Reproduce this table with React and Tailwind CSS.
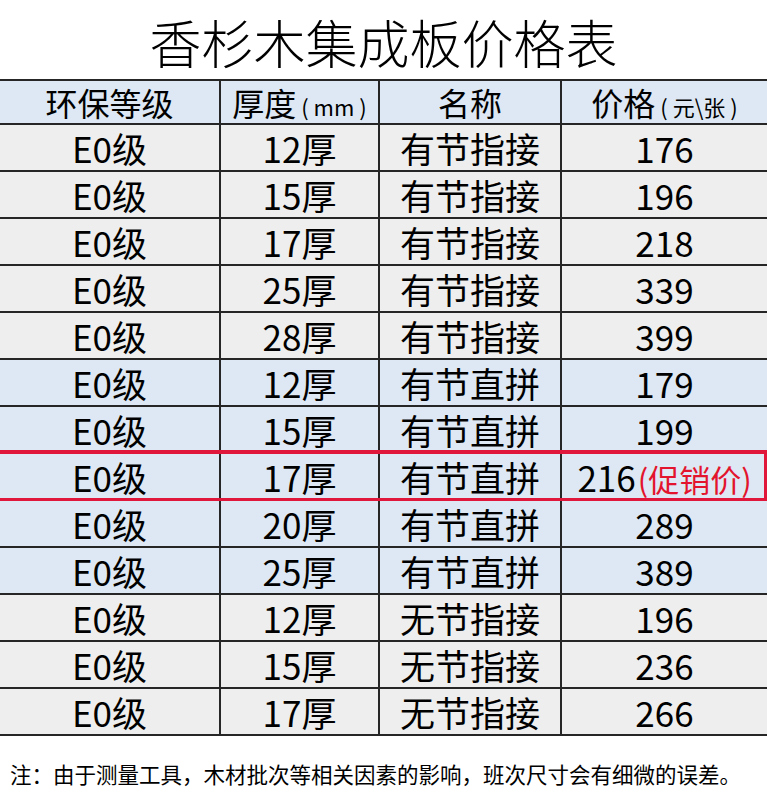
const rows = [
  ['12厚', '有节指接', '176', 'gray'],
  ['15厚', '有节指接', '196', 'gray'],
  ['17厚', '有节指接', '218', 'gray'],
  ['25厚', '有节指接', '339', 'gray'],
  ['28厚', '有节指接', '399', 'gray'],
  ['12厚', '有节直拼', '179', 'blue'],
  ['15厚', '有节直拼', '199', 'blue'],
  ['17厚', '有节直拼', '216', 'promo'],
  ['20厚', '有节直拼', '289', 'blue'],
  ['25厚', '有节直拼', '389', 'blue'],
  ['12厚', '无节指接', '196', 'gray'],
  ['15厚', '无节指接', '236', 'gray'],
  ['17厚', '无节指接', '266', 'gray'],
];

const font = { fontFamily: '"Noto Sans CJK SC", "Noto Sans", sans-serif' };

const Cell = ({ children, last }) => (
  <div className={`flex items-center justify-center whitespace-nowrap ${last ? '' : 'border-r-2 border-[#262626]'}`}>
    <span>{children}</span>
  </div>
);

const App = () => {
  return (
    <div className="w-[767px] h-[793px] bg-white text-black overflow-hidden" style={font}>
      {/* title */}
      <div className="h-[79px] flex items-center justify-center">
        <h1 className="text-[52px] leading-none font-light pt-[4px]">香杉木集成板价格表</h1>
      </div>

      {/* table */}
      <div className="border-t-2 border-[#262626]">
        <div className="grid grid-cols-[221px_159px_182px_1fr] h-[44px] bg-[#dde8f4] border-b-2 border-[#262626] text-[32px] leading-none">
          <Cell>环保等级</Cell>
          <Cell>
            厚度<span className="text-[22px] whitespace-pre"> ( mm )</span>
          </Cell>
          <Cell>名称</Cell>
          <Cell last>
            价格<span className="text-[22px] whitespace-pre"> ( 元\张 )</span>
          </Cell>
        </div>

        {rows.map(([thick, name, price, kind], i) => (
          <div
            key={i}
            className={`relative grid grid-cols-[221px_159px_182px_1fr] h-[47px] border-b-2 border-[#262626] text-[35px] leading-none ${
              kind === 'gray' ? 'bg-[#eeeeee]' : 'bg-[#dde8f4]'
            }`}
          >
            <Cell>E0级</Cell>
            <Cell>{thick}</Cell>
            <Cell>{name}</Cell>
            <Cell last>
              {price}
              {kind === 'promo' && <span className="text-[31px] text-[#e3142d] ml-[2px]">(促销价)</span>}
            </Cell>
            {kind === 'promo' && (
              <div className="absolute left-0 right-0 top-[-4px] bottom-[-3px] border-y-4 border-r-[3px] border-[#e0163a] pointer-events-none" />
            )}
          </div>
        ))}
      </div>

      {/* note */}
      <div className="pt-[26px] pl-[10px] text-[21.5px] leading-[24px] whitespace-nowrap">
        注：由于测量工具，木材批次等相关因素的影响，班次尺寸会有细微的误差。
      </div>
    </div>
  );
};

export default App;
